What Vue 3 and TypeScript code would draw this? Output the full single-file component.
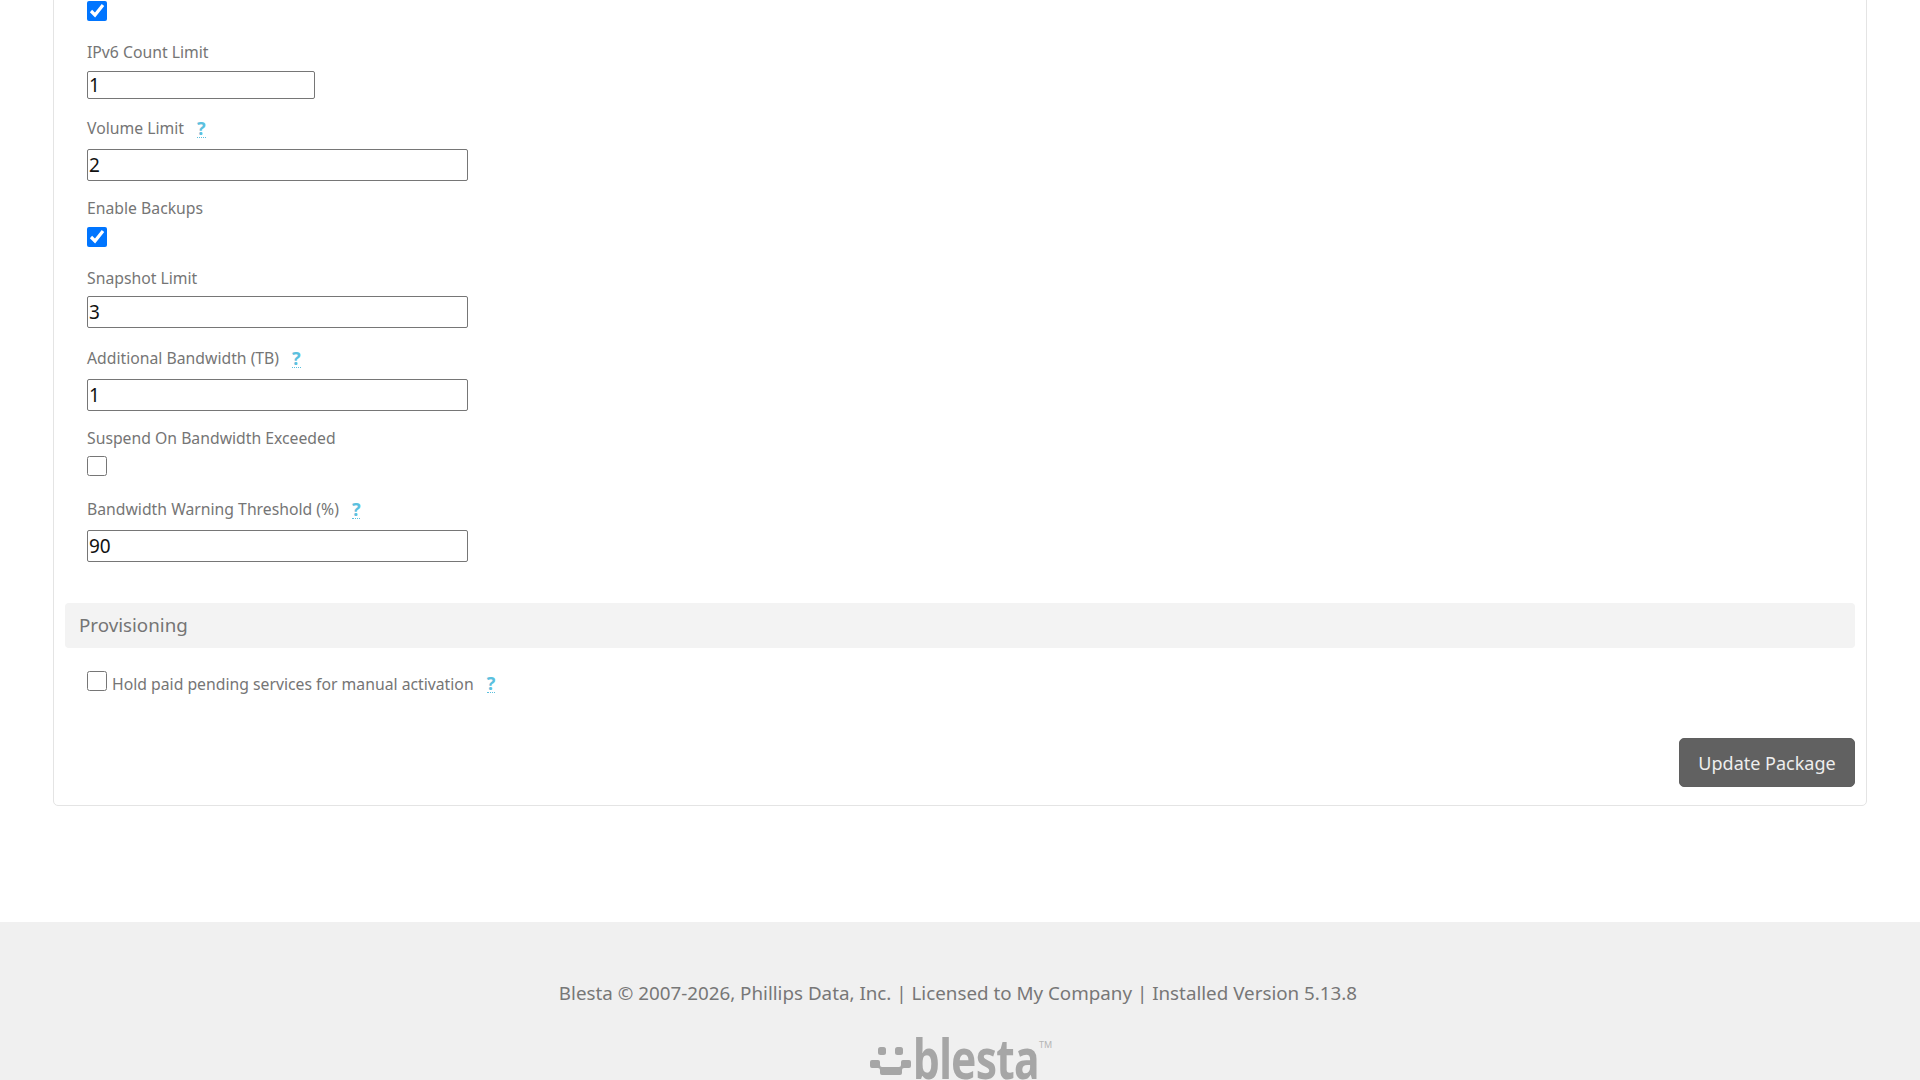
<script setup lang="ts">
type Field = {
  label: string
  kind: 'text' | 'check'
  value?: string
  checked?: boolean
  short?: boolean
  help?: boolean
  labelGap: number
  after: number
}
const fields: Field[] = [
  { label: 'IPv6 Count Limit', kind: 'text', value: '1', short: true, labelGap: 9, after: 19 },
  { label: 'Volume Limit', kind: 'text', value: '2', help: true, labelGap: 11, after: 17 },
  { label: 'Enable Backups', kind: 'check', checked: true, labelGap: 9, after: 21 },
  { label: 'Snapshot Limit', kind: 'text', value: '3', labelGap: 8, after: 20 },
  { label: 'Additional Bandwidth (TB)', kind: 'text', value: '1', help: true, labelGap: 11, after: 17 },
  { label: 'Suspend On Bandwidth Exceeded', kind: 'check', checked: false, labelGap: 8, after: 23 },
  { label: 'Bandwidth Warning Threshold (%)', kind: 'text', value: '90', help: true, labelGap: 11, after: 41 }
]
</script>

<template>
  <div class="page">
    <main class="main">
      <section class="card">
        <div class="fields">
          <input class="check first" type="checkbox" checked />
          <div
            v-for="f in fields"
            :key="f.label"
            class="field"
            :style="{ marginBottom: f.after + 'px' }"
          >
            <div class="label" :style="{ marginBottom: f.labelGap + 'px' }">
              <span>{{ f.label }}</span>
              <a v-if="f.help" class="help">?</a>
            </div>
            <input v-if="f.kind === 'text'" class="text" :class="{ short: f.short }" type="text" :value="f.value" />
            <input v-else class="check" type="checkbox" :checked="f.checked" />
          </div>
        </div>
        <h2 class="section">Provisioning</h2>
        <div class="fields hold">
          <input class="check" type="checkbox" />
          <span class="hold-text">Hold paid pending services for manual activation</span>
          <a class="help">?</a>
        </div>
        <div class="actions">
          <button class="submit" type="button">Update Package</button>
        </div>
      </section>
    </main>
    <footer class="footer">
      <p class="copy">Blesta © 2007-2026, Phillips Data, Inc. | Licensed to My Company | Installed Version 5.13.8</p>
      <div class="logo">
        <svg class="smile" width="41" height="30" viewBox="0 0 41 30" fill="#a6a6a6">
          <rect x="8" y="0" width="8" height="8" rx="2.5" />
          <rect x="25" y="0" width="8" height="8" rx="2.5" />
          <path d="M2 13h6q2 0 2 2v3q0 2 2 2h17q2 0 2-2v-3q0-2 2-2h6q2 0 2 2v4q0 2-2 2h-5q-2 0-2 2v3q0 2-2 2H12q-2 0-2-2v-3q0-2-2-2H2q-2 0-2-2v-4q0-2 2-2z" />
        </svg>
        <span class="wordmark">blesta</span>
        <span class="tm">TM</span>
      </div>
    </footer>
  </div>
</template>

<style scoped>
.page {
  height: 1080px;
  overflow: hidden;
  background: #fff;
  display: flex;
  flex-direction: column;
  font-family: "Noto Sans", "Open Sans", sans-serif;
  color: #757575;
}
.main {
  flex: 0 0 922px;
  padding: 0 53px;
  box-sizing: border-box;
}
.card {
  height: 826px;
  margin-top: -20px;
  box-sizing: border-box;
  border: 1px solid #e4e4e4;
  border-radius: 5px;
  padding: 0 11px;
  display: flow-root;
}
.fields {
  padding: 0 22px;
}
.check {
  display: block;
  width: 20px;
  height: 20px;
  margin: 0;
}
.first {
  margin-top: 20px;
  margin-bottom: 21px;
}
.label {
  display: flex;
  align-items: center;
  gap: 13px;
  height: 20px;
  font-size: 15.75px;
  line-height: 20px;
}
.help {
  color: #5bc0de;
  font-weight: 700;
  font-size: 18px;
  line-height: 18px;
  border-bottom: 1px dotted #5bc0de;
}
.text {
  display: block;
  width: 381px;
  height: 32px;
  box-sizing: border-box;
  border: 1px solid #767676;
  border-radius: 2px;
  padding: 0 1px 1px;
  font-family: "Noto Sans", sans-serif;
  font-size: 19px;
  color: #111;
  background: #fff;
}
.short {
  width: 228px;
  height: 28px;
}
.section {
  margin: 1px 0 0;
  height: 45px;
  padding: 0 14px;
  background: #f3f3f3;
  border-radius: 4px;
  font-size: 18.75px;
  font-weight: 400;
  line-height: 43px;
  color: #757575;
}
.hold {
  margin-top: 23px;
  display: flex;
  align-items: flex-start;
  height: 20px;
}
.hold-text {
  margin-left: 5px;
  margin-right: 13px;
  font-size: 15.75px;
  line-height: 20px;
  margin-top: 3px;
  white-space: nowrap;
}
.hold .help {
  margin-top: 3px;
}
.actions {
  display: flex;
  justify-content: flex-end;
  margin-top: 47px;
}
.submit {
  width: 176px;
  height: 49px;
  border: 1px solid #5f5f5f;
  border-radius: 5px;
  background: #616161;
  color: #eee;
  font-family: "Noto Sans", sans-serif;
  font-size: 18px;
  padding: 0;
}
.footer {
  flex: 0 0 158px;
  background: #f0f0f0;
  display: flex;
  flex-direction: column;
  align-items: center;
  overflow: hidden;
}
.copy {
  margin: 58px 0 0;
  padding-right: 4px;
  font-size: 18.8px;
  line-height: 26px;
  color: #777;
}
.logo {
  margin-top: 25px;
  display: flex;
  align-items: flex-start;
  height: 50px;
}
.smile {
  margin: 16px 2px 0 2px;
}
.wordmark {
  font-family: "Noto Sans", sans-serif;
  font-size: 56px;
  font-weight: 700;
  line-height: 46px;
  color: #a6a6a6;
  display: block;
  width: 121px;
  margin: 3px 5px 0 0;
  transform: scaleX(0.76);
  transform-origin: left top;
  letter-spacing: -1px;
}
.tm {
  font-size: 9px;
  line-height: 12px;
  margin-top: 8px;
  color: #b5b5b5;
}
</style>
